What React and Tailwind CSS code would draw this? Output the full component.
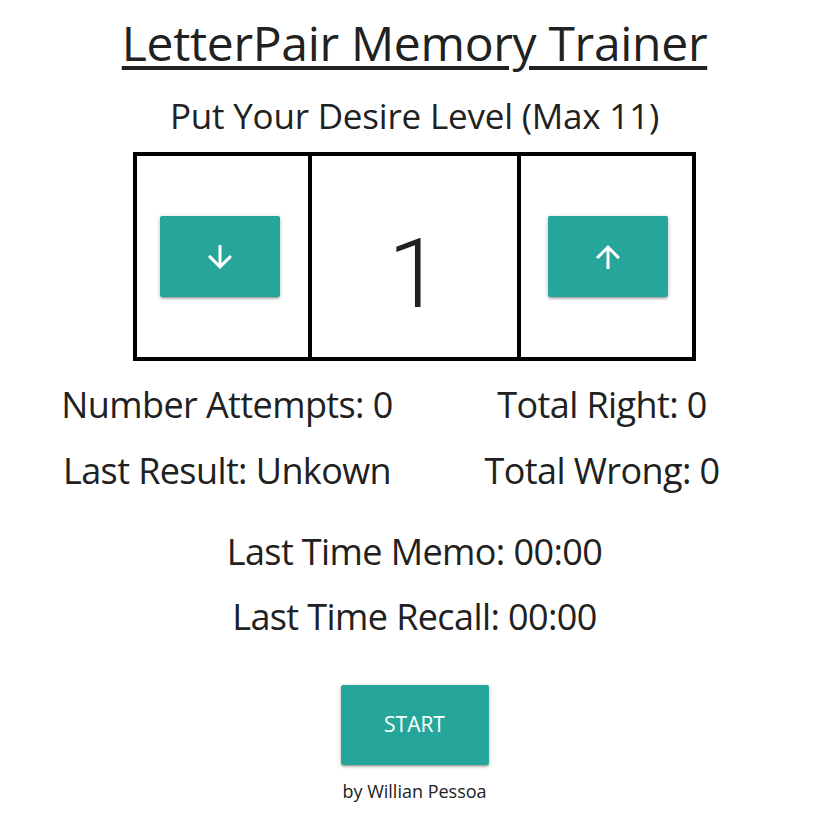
import React from "react";

const Arrow = ({ up }) => (
  <svg width="36" height="36" viewBox="0 0 24 24" fill="white">
    {up ? (
      <path d="M4 12l1.41 1.41L11 7.83V20h2V7.83l5.58 5.59L20 12l-8-8-8 8z" />
    ) : (
      <path d="M20 12l-1.41-1.41L13 16.17V4h-2v12.17l-5.58-5.59L4 12l8 8 8-8z" />
    )}
  </svg>
);

const shadow =
  "shadow-[0_2px_2px_0_rgba(0,0,0,0.14),0_3px_1px_-2px_rgba(0,0,0,0.12),0_1px_5px_0_rgba(0,0,0,0.2)]";

export default function App() {
  return (
    <div
      className="w-[829px] h-[831px] bg-white text-[#212121] flex flex-col items-center"
      style={{ fontFamily: '"Open Sans", "Noto Sans", sans-serif' }}
    >
      <h1 className="mt-[15px] text-[48px] leading-[56px] underline decoration-[4px] underline-offset-[5px] tracking-[-0.3px]">
        LetterPair Memory Trainer
      </h1>
      <h2 className="mt-[25px] text-[35px] leading-[40px] tracking-[-0.2px]">
        Put Your Desire Level (Max 11)
      </h2>
      <div className="mt-[16px] w-[563px] h-[209px] border-4 border-black grid grid-cols-[175px_209px_171px]">
        <div className="flex items-center justify-start pl-[23px] border-r-4 border-black">
          <button className={`w-[120px] h-[81px] bg-[#26a69a] rounded-[2px] ${shadow} flex items-center justify-center`}>
            <Arrow />
          </button>
        </div>
        <div className="flex items-start justify-center pt-[70px] border-r-4 border-black">
          <span className="text-[96px] font-light leading-none" style={{ fontFamily: "Roboto, sans-serif" }}>
            1
          </span>
        </div>
        <div className="flex items-center justify-start pl-[27px]">
          <button className={`w-[120px] h-[81px] bg-[#26a69a] rounded-[2px] ${shadow} flex items-center justify-center`}>
            <Arrow up />
          </button>
        </div>
      </div>
      <div className="mt-[11px] w-[750px] grid grid-cols-2 text-[36px] leading-[66px] tracking-[-0.6px] text-center">
        <div>Number Attempts: 0</div>
        <div>Total Right: 0</div>
        <div>Last Result: Unkown</div>
        <div>Total Wrong: 0</div>
      </div>
      <div className="mt-[15px] text-[36px] leading-[65px] tracking-[-0.6px] text-center">
        <div>Last Time Memo: 00:00</div>
        <div>Last Time Recall: 00:00</div>
      </div>
      <button className={`mt-[36px] w-[148px] h-[80px] bg-[#26a69a] text-white text-[21px] rounded-[2px] ${shadow}`}>
        START
      </button>
      <div className="mt-[14px] text-[18px] leading-[24px]">by Willian Pessoa</div>
    </div>
  );
}
